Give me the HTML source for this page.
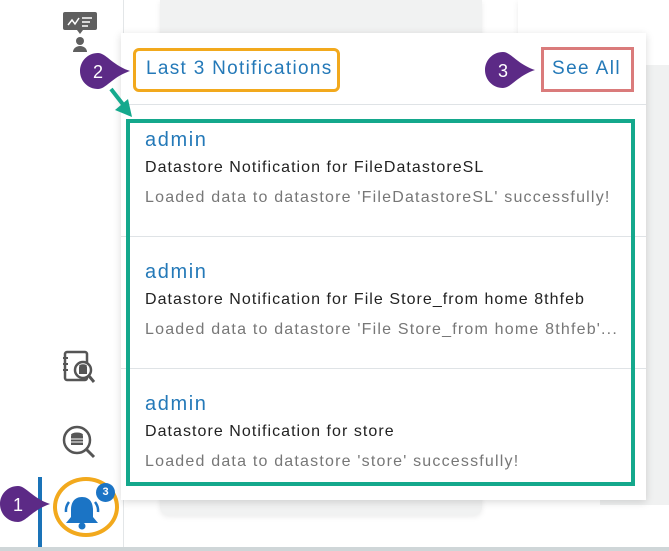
<!DOCTYPE html><html><head><style>
body{margin:0;width:669px;height:551px;position:relative;overflow:hidden;background:#fff;font-family:"Liberation Sans",sans-serif}
.a{position:absolute;white-space:nowrap}
.t{font-size:16px;letter-spacing:1.05px;color:#222}
.l{font-size:16px;letter-spacing:1.2px;color:#777}
.ad{font-size:20px;letter-spacing:1.6px;color:#2479b8}
</style></head><body>
<div class="a" style="left:123px;top:0;width:1px;height:551px;background:#e3e6e8"></div>
<div class="a" style="left:160px;top:0;width:322px;height:515px;background:#f1f2f2;border-radius:0 0 8px 8px;box-shadow:0 2px 6px rgba(0,0,0,.08)"></div>
<div class="a" style="left:518px;top:0;width:151px;height:65px;background:#fff;box-shadow:0 2px 6px rgba(0,0,0,.08)"></div>
<div class="a" style="left:600px;top:65px;width:69px;height:440px;background:#f0f1f1"></div>
<div class="a" style="left:0;top:547px;width:669px;height:4px;background:#cfd6d8"></div>
<div class="a" style="left:38px;top:477px;width:4px;height:70px;background:#1a73b8"></div>
<svg class="a" style="left:62px;top:11px" width="36" height="42"><rect x="1" y="1" width="34" height="18" rx="2" fill="#5f5f5f"/><path d="M15 19l3 4 3-4z" fill="#5f5f5f"/><path d="M6 14l4-5 3 4 4-6" stroke="#fff" stroke-width="1.5" fill="none"/><path d="M20 7h10M20 11h8M20 15h6" stroke="#fff" stroke-width="1.5"/><circle cx="18" cy="30" r="4" fill="#5f5f5f"/><path d="M11 41a7 6 0 0114 0z" fill="#5f5f5f"/></svg>
<svg class="a" style="left:62px;top:350px" width="36" height="38"><rect x="3" y="2" width="22" height="28" rx="2" fill="none" stroke="#555" stroke-width="2.5"/><path d="M1 8h5M1 14h5M1 20h5" stroke="#555" stroke-width="2"/><circle cx="21" cy="20" r="8" fill="#fff" stroke="#555" stroke-width="2.5"/><ellipse cx="21" cy="16" rx="4" ry="1.8" fill="#555"/><rect x="17" y="17" width="8" height="7" fill="#555"/><path d="M27 26l5 6" stroke="#555" stroke-width="3"/></svg>
<svg class="a" style="left:60px;top:423px" width="38" height="38"><circle cx="17" cy="17" r="13" fill="none" stroke="#555" stroke-width="2.5"/><ellipse cx="17" cy="12" rx="6" ry="2.5" fill="#555"/><rect x="11" y="13" width="12" height="9" fill="#555"/><path d="M11 16h12M11 19h12" stroke="#fff" stroke-width="1"/><path d="M26 26l8 8" stroke="#555" stroke-width="3"/></svg>
<div class="a" style="left:53px;top:477px;width:66px;height:60px;border:4px solid #f2a91d;border-radius:50%;box-sizing:border-box"></div>
<svg class="a" style="left:60px;top:490px" width="44" height="44"><path d="M22 7c-8 0-11 6-11 13v7l-5 6h32l-5-6v-7c0-7-3-13-11-13z" fill="#1b74c5"/><circle cx="22" cy="36" r="3.5" fill="#1b74c5"/><path d="M9 12a14 14 0 00-3 10M35 12a14 14 0 013 10" stroke="#1b74c5" stroke-width="2.5" fill="none"/></svg>
<div class="a" style="left:96px;top:483px;width:19px;height:19px;border-radius:50%;background:#1b74c5;color:#fff;font-size:11px;font-weight:bold;text-align:center;line-height:19px">3</div>
<div class="a" style="left:121px;top:33px;width:525px;height:467px;background:#fff;box-shadow:0 2px 8px rgba(0,0,0,.15)"></div>
<div class="a" style="left:121px;top:104px;width:525px;height:1px;background:#dfe3e6"></div>
<div class="a" style="left:121px;top:236px;width:525px;height:1px;background:#dfe3e6"></div>
<div class="a" style="left:121px;top:368px;width:525px;height:1px;background:#dfe3e6"></div>
<div class="a" style="left:133px;top:48px;width:207px;height:44px;border:3px solid #f2a91d;border-radius:6px;box-sizing:border-box"></div>
<div class="a" style="left:146px;top:58px;font-size:19px;letter-spacing:1.3px;color:#2479b8">Last 3 Notifications</div>
<div class="a" style="left:541px;top:47px;width:93px;height:45px;border:3px solid #da7b7b;box-sizing:border-box"></div>
<div class="a" style="left:552px;top:58px;font-size:19px;letter-spacing:1.4px;color:#2479b8">See All</div>
<div class="a" style="left:126px;top:119px;width:509px;height:367px;border:4px solid #14a88c;box-sizing:border-box"></div>
<div class="a ad" style="left:145px;top:129px">admin</div>
<div class="a t" style="left:145px;top:159px">Datastore Notification for FileDatastoreSL</div>
<div class="a l" style="left:145px;top:189px">Loaded data to datastore 'FileDatastoreSL' successfully!</div>
<div class="a ad" style="left:145px;top:261px">admin</div>
<div class="a t" style="left:145px;top:291px">Datastore Notification for File Store_from home 8thfeb</div>
<div class="a l" style="left:145px;top:321px">Loaded data to datastore 'File Store_from home 8thfeb'...</div>
<div class="a ad" style="left:145px;top:393px">admin</div>
<div class="a t" style="left:145px;top:423px">Datastore Notification for store</div>
<div class="a l" style="left:145px;top:453px">Loaded data to datastore 'store' successfully!</div>
<svg class="a" style="left:0;top:484px" width="52" height="40"><path d="M18 2C8 2 0 10 0 20s8 18 18 18c8 0 14-12 32-18C32 14 26 2 18 2z" fill="#5c2a86"/><text x="13" y="27" fill="#fff" font-size="18" font-family="Liberation Sans">1</text></svg>
<svg class="a" style="left:80px;top:52px" width="52" height="38"><path d="M18 1C8 1 0 9 0 19s8 18 18 18c8 0 14-12 32-18C32 13 26 1 18 1z" fill="#5c2a86"/><text x="13" y="26" fill="#fff" font-size="18" font-family="Liberation Sans">2</text></svg>
<svg class="a" style="left:485px;top:51px" width="52" height="38"><path d="M18 1C8 1 0 9 0 19s8 18 18 18c8 0 14-12 32-18C32 13 26 1 18 1z" fill="#5c2a86"/><text x="13" y="26" fill="#fff" font-size="18" font-family="Liberation Sans">3</text></svg>
<svg class="a" style="left:105px;top:86px" width="30" height="34"><path d="M6 3l14 18" stroke="#15a98d" stroke-width="4"/><path d="M10 24l17 7-4-18z" fill="#15a98d"/></svg>
</body></html>
